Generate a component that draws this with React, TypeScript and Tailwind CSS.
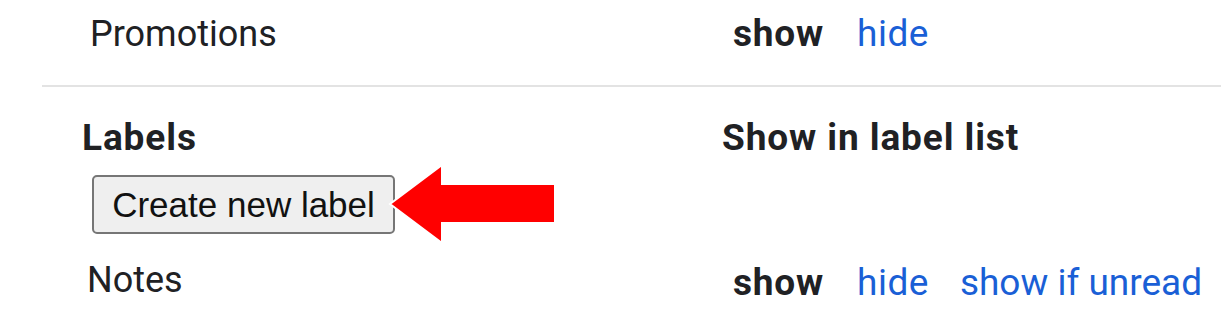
export default function App() {
  return (
    <div className="relative h-[326px] w-[1221px] overflow-hidden bg-white font-['Roboto',sans-serif] text-[#202124]">
      {/* Promotions row */}
      <div className="flex h-[85px] pt-[13px] text-[36px] leading-[42px]">
        <div className="w-[722px] pl-[90px]">Promotions</div>
        <div className="flex pl-[11px]">
          <span className="text-[37px] font-bold tracking-[0.8px]">show</span>
          <a className="ml-[33px] text-[37px] tracking-[0.5px] text-[#1a5fd6]">hide</a>
        </div>
      </div>

      <div className="ml-[42px] h-[2px] bg-[#e3e3e3]" />

      {/* Labels header */}
      <div className="flex pt-[30px] text-[36px] leading-[42px]">
        <div className="w-[722px] pl-[82px]">
          <div className="text-[37px] font-bold tracking-[0.9px]">Labels</div>
          <div className="relative ml-[10px] mt-[16px] w-fit">
            <button className="flex h-[59px] w-[303px] items-center justify-center rounded-[5px] border-2 border-[#767676] bg-[#efefef] font-['Liberation_Sans',Arial,sans-serif] text-[35px] text-[#111]">
              Create new label
            </button>
            <svg
              className="absolute left-[296px] top-[-12px]"
              width="170"
              height="82"
              viewBox="0 0 170 82"
            >
              <polygon
                points="2,41 54,2 54,21 167,21 167,60 54,60 54,80"
                fill="#ff0000"
                stroke="#ffffff"
                strokeWidth="2"
                strokeLinejoin="miter"
              />
            </svg>
          </div>
        </div>
        <div className="text-[37px] font-bold tracking-[0.9px]">Show in label list</div>
      </div>

      {/* Notes row */}
      <div className="mt-[25px] flex text-[36px] leading-[42px]">
        <div className="w-[722px] pl-[87px]">Notes</div>
        <div className="flex pl-[11px] pt-[3px]">
          <span className="text-[37px] font-bold tracking-[0.8px]">show</span>
          <a className="ml-[33px] text-[37px] tracking-[0.5px] text-[#1a5fd6]">hide</a>
          <a className="ml-[31px] text-[37px] text-[#1a5fd6]">show if unread</a>
        </div>
      </div>

      {/* next row, cut off by the frame */}
      <div className="mt-[16px] flex text-[36px] leading-[42px]">
        <div className="w-[722px] pl-[90px]">Company minutes</div>
      </div>
    </div>
  )
}
